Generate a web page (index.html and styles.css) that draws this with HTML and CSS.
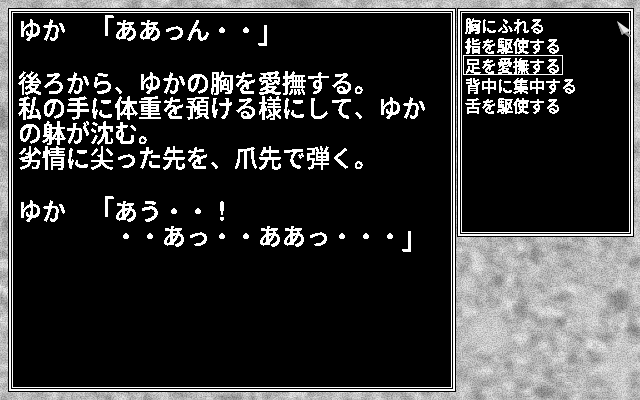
FILE: index.html
```html
<!DOCTYPE html>
<html lang="ja">
<head>
<meta charset="utf-8">
<title>ゆか</title>
<link rel="stylesheet" href="styles.css">
</head>
<body>
<svg class="backdrop" width="640" height="400" viewBox="0 0 640 400" aria-hidden="true">
  <defs>
    <filter id="stone" x="0" y="0" width="100%" height="100%" color-interpolation-filters="sRGB">
      <feTurbulence type="fractalNoise" baseFrequency="0.07 0.085" numOctaves="4" seed="23"/>
      <feColorMatrix type="matrix" values="0.6 0.6 0 0 0.14  0.6 0.6 0 0 0.14  0.6 0.6 0 0 0.14  0 0 0 0 1"/>
    </filter>
    <filter id="grain" x="0" y="0" width="100%" height="100%" color-interpolation-filters="sRGB">
      <feTurbulence type="fractalNoise" baseFrequency="0.8" numOctaves="2" seed="5"/>
      <feColorMatrix type="matrix" values="1.8 0 0 0 -0.15  1.8 0 0 0 -0.15  1.8 0 0 0 -0.15  0 0 0 0 1"/>
    </filter>
    <filter id="blur3"><feGaussianBlur stdDeviation="2.5"/></filter>
    <filter id="blur6"><feGaussianBlur stdDeviation="6"/></filter>
    <filter id="crisp" x="0" y="0" width="100%" height="100%" color-interpolation-filters="sRGB">
      <feComponentTransfer>
        <feFuncA type="discrete" tableValues="0 1 1 1"/>
      </feComponentTransfer>
    </filter>
  </defs>
  <rect width="640" height="400" fill="#b2b2b2"/>
  <rect width="640" height="400" filter="url(#stone)" opacity="0.7"/>
  <g filter="url(#blur6)" fill="#d8d8d8" opacity="0.75">
    <ellipse cx="488" cy="335" rx="20" ry="18"/>
    <ellipse cx="590" cy="303" rx="20" ry="10"/>
    <ellipse cx="620" cy="360" rx="18" ry="16"/>
    <ellipse cx="468" cy="280" rx="8" ry="12"/>
    <ellipse cx="618" cy="385" rx="14" ry="8"/>
  </g>
  <g filter="url(#blur3)" fill="#606060" opacity="0.75">
    <ellipse cx="498" cy="281" rx="6" ry="7"/>
    <ellipse cx="535" cy="255" rx="5" ry="10"/>
    <ellipse cx="563" cy="247" rx="9" ry="4"/>
    <ellipse cx="620" cy="301" rx="9" ry="11"/>
    <ellipse cx="632" cy="330" rx="8" ry="4"/>
    <ellipse cx="561" cy="323" rx="4" ry="4"/>
    <ellipse cx="572" cy="359" rx="5" ry="5"/>
    <ellipse cx="523" cy="315" rx="4" ry="6"/>
    <ellipse cx="545" cy="392" rx="12" ry="6"/>
    <ellipse cx="508" cy="365" rx="5" ry="3"/>
    <ellipse cx="2" cy="120" rx="5" ry="12"/>
    <ellipse cx="300" cy="3" rx="16" ry="3"/>
    <ellipse cx="230" cy="397" rx="14" ry="3"/>
  </g>
  <rect width="640" height="400" filter="url(#grain)" opacity="0.28"/>
</svg>
<main class="screen">
  <section class="window story">
    <div class="pixel-text">
      <p class="line">ゆか　<span class="bracket">「</span>ああっん・・<span class="bracket">」</span></p>
      <p class="line para">後ろから、ゆかの胸を愛撫する。</p>
      <p class="line">私の手に体重を預ける様にして、ゆか</p>
      <p class="line">の躰が沈む。</p>
      <p class="line">劣情に尖った先を、爪先で弾く。</p>
      <p class="line para">ゆか　<span class="bracket">「</span>あう・・！</p>
      <p class="line">　　　　・・あっ・・ああっ・・・<span class="bracket">」</span></p>
    </div>
  </section>
  <nav class="window menu">
    <ul class="pixel-text choices">
      <li class="choice">胸にふれる</li>
      <li class="choice">指を駆使する</li>
      <li class="choice selected">足を愛撫する</li>
      <li class="choice">背中に集中する</li>
      <li class="choice">舌を駆使する</li>
    </ul>
  </nav>
</main>
<svg class="cursor" width="18" height="20" viewBox="0 0 18 20" aria-hidden="true">
  <polygon points="1,1 15,11 11,12 15,16 13,17 8,13 6,15" fill="#e8e8e8"/>
  <polygon points="1,1 8,13 6,15" fill="#9a9a9a"/>
  <polygon points="8,13 11,12 15,16 13,17" fill="#8a8a8a"/>
</svg>
</body>
</html>
```
FILE: styles.css
```css
html, body {
  margin: 0;
  padding: 0;
  background: #b2b2b2;
}
body {
  position: relative;
  width: 640px;
  height: 400px;
  overflow: hidden;
}
.backdrop {
  position: absolute;
  left: 0;
  top: 0;
}
.cursor {
  position: absolute;
  left: 616px;
  top: 20px;
}
.screen {
  position: relative;
  box-sizing: border-box;
  width: 640px;
  height: 400px;
  padding: 8px 6px 8px 8px;
  display: flex;
  align-items: flex-start;
  gap: 1px;
  font-family: "Noto Sans CJK JP", sans-serif;
  color: #fff;
  text-spacing-trim: space-all;
  font-kerning: none;
}
.window {
  box-sizing: border-box;
  background: #000;
  box-shadow:
    inset 0 0 0 1px #000,
    inset 0 0 0 3px #fff,
    inset 0 0 0 4px #000,
    inset 0 0 0 5px #fff;
}
.story {
  width: 448px;
  height: 384px;
  padding: 8px 10px;
  font-size: 24px;
  line-height: 25px;
  font-weight: 500;
}
.menu {
  width: 177px;
  height: 229px;
  padding: 7px 6px;
  font-size: 16px;
  line-height: 20px;
  font-weight: 500;
}
.pixel-text {
  filter: url(#crisp);
}
.line {
  margin: 0;
  white-space: pre;
}
.para {
  margin-top: 28px;
}
.bracket {
  display: inline-block;
  transform: scaleY(1.3);
}
.choices {
  list-style: none;
  margin: 0;
  padding: 0;
}
.choice {
  padding-left: 2px;
  white-space: nowrap;
}
.selected {
  box-sizing: border-box;
  width: 100px;
  height: 20px;
  line-height: 18px;
  padding-left: 1px;
  border: 1px solid #fff;
}
```
